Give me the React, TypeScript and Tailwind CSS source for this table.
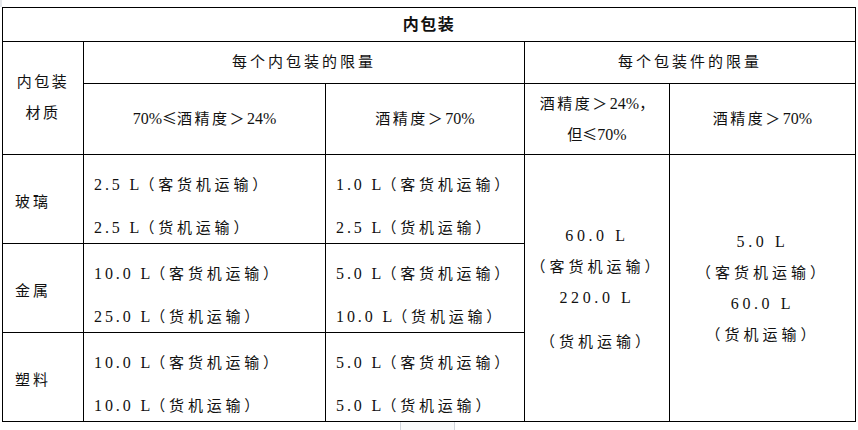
const serif = "font-['Liberation_Serif','Noto_Sans_CJK_SC',serif]";
const cjk = "font-['Noto_Sans_CJK_SC',sans-serif]";

const rows: { label: string; a: [string, string]; b: [string, string] }[] = [
  { label: '玻璃', a: ['2.5', '2.5'], b: ['1.0', '2.5'] },
  { label: '金属', a: ['10.0', '25.0'], b: ['5.0', '10.0'] },
  { label: '塑料', a: ['10.0', '10.0'], b: ['5.0', '5.0'] },
];

function Amount({ value, cargoOnly }: { value: string; cargoOnly?: boolean }) {
  return (
    <div className="whitespace-nowrap leading-[20px]">
      <span className="text-[16px] tracking-[2.9px]">{value} </span>
      <span className="text-[16px]">L</span>
      <span className="tracking-[3.8px]">{cargoOnly ? '（货机运输）' : '（客货机运输）'}</span>
    </div>
  );
}

function Line({ children, className = '' }: { children: React.ReactNode; className?: string }) {
  return <div className={`whitespace-nowrap leading-[20px] ${className}`}>{children}</div>;
}

export default function App() {
  const cell = 'border border-black p-0';

  return (
    <div className={`min-h-[430px] w-[858px] bg-white text-[15px] text-[#111] ${serif}`}>
      <div className="h-[7px] w-[2px] bg-gray-200" />
      <table className="ml-[2px] w-[853px] table-fixed border-collapse">
        <colgroup>
          <col className="w-[81px]" />
          <col className="w-[242px]" />
          <col className="w-[199px]" />
          <col className="w-[145px]" />
          <col className="w-[186px]" />
        </colgroup>
        <tbody>
          <tr className="h-[34px]">
            <td colSpan={5} className={`${cell} text-center text-[16px] font-bold tracking-[1.5px]`}>
              内包装
            </td>
          </tr>
          <tr className="h-[42px]">
            <td rowSpan={2} className={`${cell} text-center leading-[31px] tracking-[2.5px]`}>
              <div>内包装</div>
              <div>材质</div>
            </td>
            <td colSpan={2} className={`${cell} text-center tracking-[3px]`}>
              每个内包装的限量
            </td>
            <td colSpan={2} className={`${cell} text-center tracking-[3px]`}>
              每个包装件的限量
            </td>
          </tr>
          <tr className="h-[71px]">
            <td className={`${cell} text-center`}>
              <span className="text-[16px]">70%</span>
              <span className={cjk}>≤</span>
              <span className="tracking-[2.5px]">酒精度＞</span>
              <span className="text-[16px]">24%</span>
            </td>
            <td className={`${cell} text-center`}>
              <span className="tracking-[2.5px]">酒精度＞</span>
              <span className="text-[16px]">70%</span>
            </td>
            <td className={`${cell} text-center leading-[30px]`}>
              <div>
                <span className="tracking-[2.5px]">酒精度＞</span>
                <span className="text-[16px]">24%</span>
                <span>，</span>
              </div>
              <div>
                <span>但</span>
                <span className={cjk}>≤</span>
                <span className="text-[16px]">70%</span>
              </div>
            </td>
            <td className={`${cell} text-center`}>
              <span className="tracking-[2.5px]">酒精度＞</span>
              <span className="text-[16px]">70%</span>
            </td>
          </tr>
          {rows.map((r, i) => (
            <tr key={r.label} className="h-[89px]">
              <td className={`${cell} pl-[12px] pt-[6px] align-middle tracking-[3px]`}>{r.label}</td>
              <td className={`${cell} pl-[10px] pt-[20px] align-top`}>
                <Amount value={r.a[0]} />
                <div className="mt-[23px]">
                  <Amount value={r.a[1]} cargoOnly />
                </div>
              </td>
              <td className={`${cell} pl-[10px] pt-[20px] align-top`}>
                <Amount value={r.b[0]} />
                <div className="mt-[23px]">
                  <Amount value={r.b[1]} cargoOnly />
                </div>
              </td>
              {i === 0 && (
                <>
                  <td rowSpan={3} className={`${cell} pt-[71px] text-center align-top`}>
                    <Line className="text-[16px] tracking-[3.6px]">60.0 L</Line>
                    <Line className="mt-[11px] tracking-[4px]">（客货机运输）</Line>
                    <Line className="mt-[11px] text-[16px] tracking-[3.6px]">220.0 L</Line>
                    <Line className="mt-[24px] tracking-[4px]">（货机运输）</Line>
                  </td>
                  <td rowSpan={3} className={`${cell} pt-[77px] text-center align-top`}>
                    <Line className="text-[16px] tracking-[3.6px]">5.0 L</Line>
                    <Line className="mt-[11px] tracking-[4px]">（客货机运输）</Line>
                    <Line className="mt-[11px] text-[16px] tracking-[3.6px]">60.0 L</Line>
                    <Line className="mt-[11px] tracking-[4px]">（货机运输）</Line>
                  </td>
                </>
              )}
            </tr>
          ))}
        </tbody>
      </table>
      <div className="ml-[400px] h-[8px] w-[55px] border-x border-gray-300 bg-gray-50" />
    </div>
  );
}
